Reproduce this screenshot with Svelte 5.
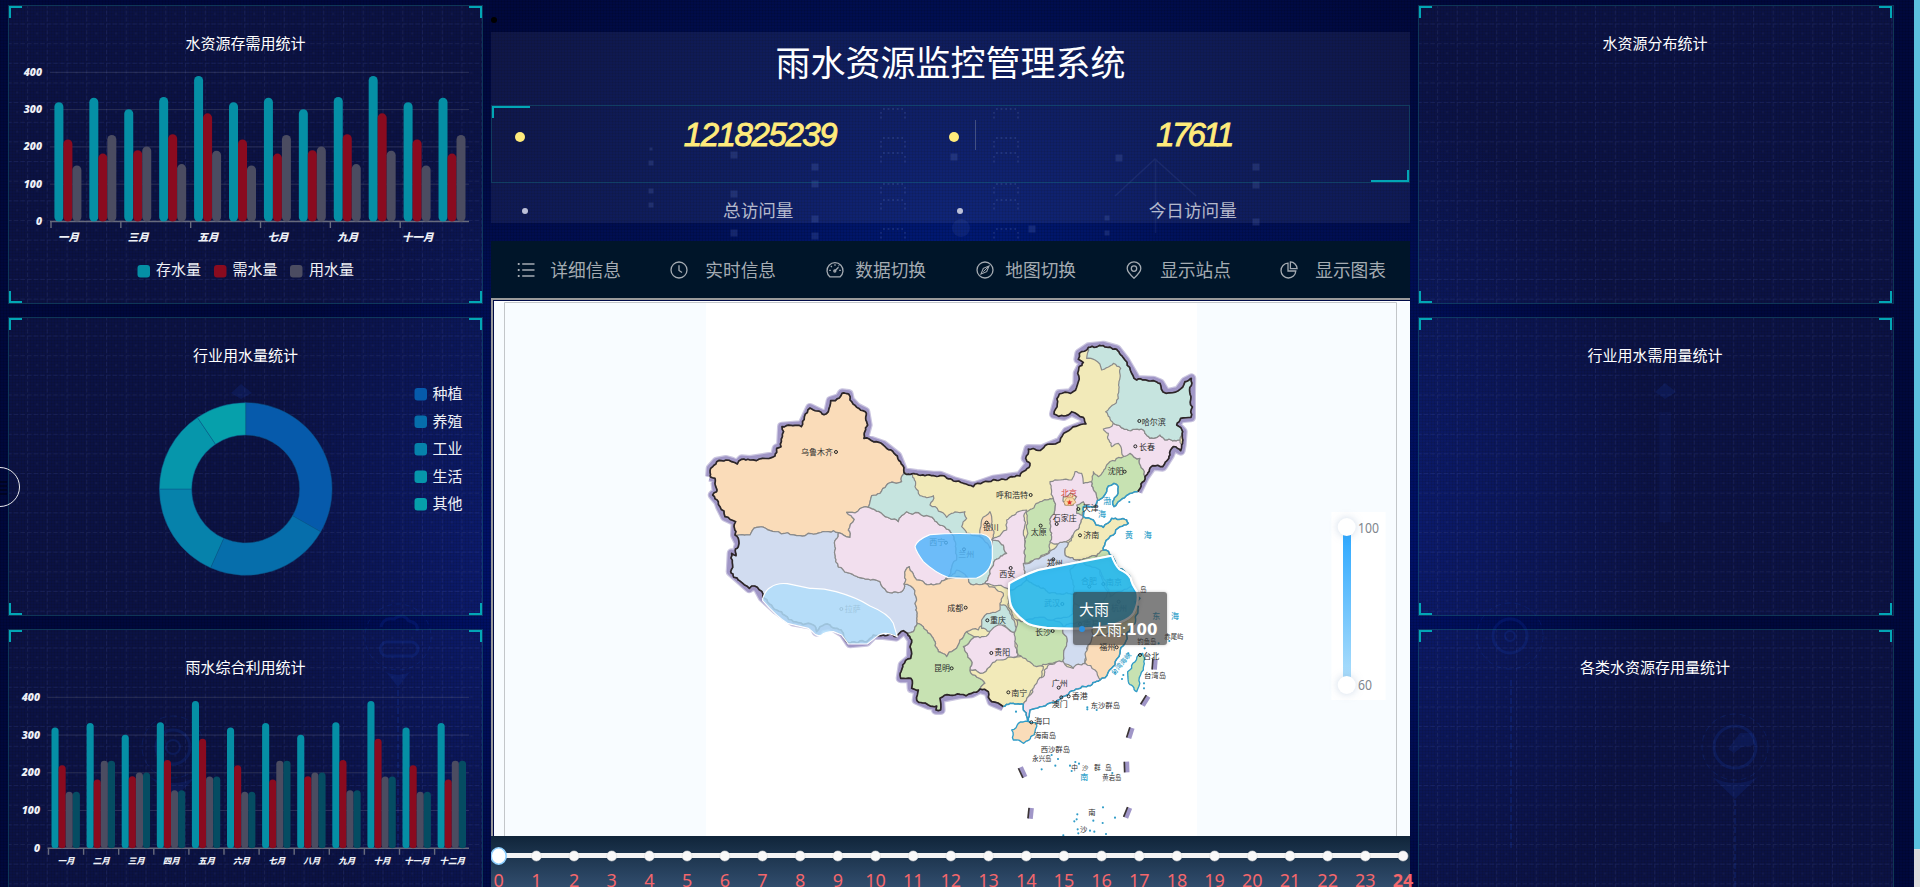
<script>
  const months = ['一月', '二月', '三月', '四月', '五月', '六月', '七月', '八月', '九月', '十月', '十一月', '十二月'];
  const stored = [320, 332, 301, 334, 390, 320, 332, 301, 334, 390, 320, 332];
  const needed = [220, 182, 191, 234, 290, 220, 182, 191, 234, 290, 220, 182];
  const used = [150, 232, 201, 154, 190, 150, 232, 201, 154, 190, 150, 232];
  const colors = ['#058fa5', '#8a0b1f', '#4b4c61', '#054c62'];

  const charts = {
    top: { series: [stored, needed, used], x0: 42, step: 34.92, y0: 215.5, k: 0.373, bw: 9, off: 3.4, every: 2, axisX: 33, labelY: 234.8, legend: true },
    bottom: { series: [stored, needed, used, used], x0: 39.5, step: 35.1, y0: 218.3, k: 0.3775, bw: 7.1, off: 3, every: 1, axisX: 31, labelY: 234.3, legend: false }
  };
  const legend = [['存水量', 128.5, 147], ['需水量', 205, 223.5], ['用水量', 281, 300]];

  const slices = [
    ['种植', '#065aab', 0, 119.7], ['养殖', '#066eab', 119.7, 204], ['工业', '#0682ab', 204, 270],
    ['生活', '#0696ab', 270, 326], ['其他', '#06a0ab', 326, 360]
  ];
  function arc(a, b) {
    const p = (r, d) => {
      const t = ((d - 90) * Math.PI) / 180;
      return `${(236.7 + r * Math.cos(t)).toFixed(2)} ${(171 + r * Math.sin(t)).toFixed(2)}`;
    };
    const big = b - a > 180 ? 1 : 0;
    return `M${p(86.3, a)}A86.3 86.3 0 ${big} 1 ${p(86.3, b)}L${p(54, b)}A54 54 0 ${big} 0 ${p(54, a)}Z`;
  }

  const menu = [
    ['list', '详细信息'], ['clock', '实时信息'], ['gauge', '数据切换'],
    ['compass', '地图切换'], ['pin', '显示站点'], ['pie', '显示图表']
  ];
  const menuLeft = [25.5, 179.5, 335, 485, 634.5, 789.5];
  const menuText = [59.3, 214.3, 364.3, 514.3, 669.3, 824.3];

  // Roughens each edge by midpoint displacement; shared edges get identical detail from either side.
  function rough(pts, closed = true) {
    const out = [];
    const split = (a, b) => {
      const dx = b[0] - a[0], dy = b[1] - a[1], len = Math.hypot(dx, dy);
      if (len < 10) { out.push(b); return; }
      const mx = (a[0] + b[0]) / 2, my = (a[1] + b[1]) / 2;
      const h = Math.sin(mx * 12.9898 + my * 78.233) * 43758.5453;
      const s = (h - Math.floor(h) - 0.5) * (dx > 0 || (dx === 0 && dy > 0) ? 1 : -1) * (len > 40 ? 0.16 : 0.36);
      const m = [mx - dy * s, my + dx * s];
      split(a, m); split(m, b);
    };
    out.push(pts[0]);
    for (let i = 1; i < pts.length; i++) split(pts[i - 1], pts[i]);
    if (closed) split(pts[pts.length - 1], pts[0]);
    return 'M' + out.map((p) => p[0].toFixed(1) + ' ' + p[1].toFixed(1)).join('L') + (closed ? 'Z' : '');
  }
  const plain = (pts) => 'M' + pts.map((p) => p.join(' ')).join('L');
  const P = (s) => s.trim().split(/\s+/).map((q) => q.split(',').map(Number));

  const north = P(`30,440 32,415 50,395 78,390 95,395 112,402 125,388 150,390 225,378 230,355 243,350 246,290 298,286 304,290 330,234 372,254 385,245 392,212 418,204 426,190 446,192 450,210 470,232 496,245 503,285 492,325 550,345 592,378 612,427 650,432 700,437 720,437 760,453 820,470 880,449 960,438 990,400 977,385 985,357 1025,358 1080,335 1100,305 1158,282 1150,262 1115,245 1092,258 1062,252 1078,192 1112,190 1132,165 1133,130 1150,97 1135,88 1138,70 1165,52 1210,47 1250,58 1275,90 1310,150 1360,152 1380,160 1398,190 1435,182 1455,155 1474,145 1473,200 1473,262 1442,265 1430,285 1448,305 1445,345 1442,362 1420,350 1410,375 1388,410 1358,407 1335,440 1313,485`);
  const coast = P(`1313,485 1295,490 1260,512 1242,530 1238,515 1252,495 1255,470 1242,460 1225,468 1220,485 1192,512 1185,530 1150,530 1150,560 1180,570 1188,585 1210,592 1235,565 1280,570 1285,580 1260,590 1240,615 1215,640 1210,660 1235,677 1255,715 1290,740 1300,770 1310,800 1320,805 1305,815 1315,830 1305,880 1280,910 1275,940 1260,970 1245,1005 1200,1050 1160,1070 1110,1085 1080,1108 1020,1130 990,1140 985,1165 990,1180 970,1140 970,1123 930,1120 910,1130`);
  const south = P(`910,1130 875,1115 865,1085 840,1077 815,1090 780,1093 720,1105 722,1140 708,1140 710,1128 685,1125 650,1110 655,1080 635,1075 633,1045 602,1045 608,1005 632,985 635,930 622,910 610,902 588,920 550,915 520,915 500,935 450,940 430,910 390,885 360,890 350,905 340,885 280,875 230,840 188,802 172,772 155,768 148,775 92,725 95,670 108,677 117,640 105,615 107,575 75,560 60,530 55,515 38,495 50,485 45,445 30,440`);
  const nation = [...north, ...coast.slice(1), ...south.slice(1, -1)];

  const O = '#fadcb9', B = '#d1dcf0', K = '#f2dfee', T = '#c6e4df', G = '#c7e2b2', Y = '#f2eab9';
  const provinces = [
    [O, '30,440 32,415 50,395 78,390 95,395 112,402 125,388 150,390 225,378 230,355 243,350 246,290 298,286 304,290 330,234 372,254 385,245 392,212 418,204 426,190 446,192 450,210 470,232 496,245 503,285 492,325 550,345 592,378 612,427 605,455 560,465 540,490 515,497 505,532 440,547 463,568 445,600 450,622 415,608 385,605 325,610 300,617 225,605 170,592 150,615 117,615 105,615 107,575 75,560 60,530 55,515 38,495 50,485 45,445'],
    [B, '117,615 150,615 170,592 225,605 300,617 325,610 385,605 415,608 405,650 407,695 430,720 540,755 560,785 605,785 612,762 632,768 648,800 652,880 640,905 622,910 610,902 588,920 550,915 520,915 500,935 450,940 430,910 390,885 360,890 350,905 340,885 280,875 230,840 188,802 172,772 155,768 148,775 92,725 95,670 108,677 117,640 105,615'],
    [K, '440,547 505,532 545,550 595,575 620,545 690,560 755,610 770,690 735,750 700,765 650,750 628,710 615,735 612,762 605,785 560,785 540,755 430,720 407,695 405,650 415,608 450,622 445,600 463,568'],
    [T, '612,427 635,432 645,470 660,497 700,497 690,525 740,562 755,550 795,545 800,565 785,590 800,610 840,620 875,630 910,645 920,670 885,690 870,720 855,760 820,765 800,740 770,720 735,750 770,690 755,610 690,560 620,545 595,575 545,550 505,532 515,497 540,490 560,465 605,455'],
    [O, '840,620 845,570 870,545 875,560 872,590 882,610 875,630 870,655'],
    [K, '875,630 905,610 920,600 920,570 955,545 980,540 975,640 975,700 980,750 930,780 855,760 870,720 885,690 920,670 910,645'],
    [G, '980,545 1020,515 1060,505 1065,540 1050,580 1055,620 1050,660 975,700 975,640'],
    [K, '1050,455 1080,450 1115,450 1125,425 1145,430 1150,460 1175,455 1190,500 1185,530 1150,530 1150,560 1130,600 1090,645 1050,635 1055,620 1050,580 1065,540 1060,505'],
    [Y, '1090,500 1110,490 1130,500 1120,525 1095,525'],
    [G, '1130,525 1150,515 1150,560 1130,550'],
    [G, '1175,455 1180,425 1195,440 1220,405 1270,380 1290,370 1320,385 1335,440 1313,485 1295,490 1260,512 1242,530 1238,515 1252,495 1255,470 1242,460 1225,468 1220,485 1192,512 1190,500'],
    [K, '1210,297 1240,280 1280,298 1330,300 1360,325 1380,315 1395,330 1440,330 1445,345 1442,362 1420,350 1410,375 1388,410 1358,407 1335,440 1320,385 1290,370 1270,378 1255,340 1235,350 1225,310'],
    [T, '1160,85 1165,52 1210,47 1250,58 1275,90 1310,150 1360,152 1380,160 1398,190 1435,182 1455,155 1474,145 1473,200 1473,262 1442,265 1430,285 1448,305 1440,330 1395,330 1380,315 1360,325 1330,300 1280,298 1240,280 1217,245 1255,205 1262,115 1240,100 1205,120 1185,90'],
    [Y, '1130,600 1150,560 1180,570 1188,585 1210,592 1235,565 1280,570 1285,580 1260,590 1240,615 1215,640 1210,660 1190,680 1140,690 1095,675 1105,640'],
    [B, '970,700 1055,660 1080,637 1105,640 1095,675 1140,690 1130,790 1050,790 980,750'],
    [T, '1110,720 1140,690 1200,720 1220,800 1180,850 1120,820'],
    [G, '1140,690 1190,680 1210,660 1235,677 1255,715 1290,740 1300,770 1230,800 1200,720'],
    [Y, '930,780 980,750 1050,790 1130,790 1120,850 1060,870 950,870 925,830'],
    [T, '840,870 880,830 920,830 930,850 945,880 945,910 910,885 880,910 845,895'],
    [O, '612,762 615,735 628,710 650,750 700,765 735,750 770,740 800,740 820,765 855,760 910,790 900,840 870,850 845,870 835,900 800,905 780,930 762,960 740,980 715,965 700,925 670,890 652,880 648,800 632,768'],
    [K, '790,950 830,920 850,920 905,885 950,910 945,940 955,975 930,990 870,1010 840,1030 810,1020 812,990'],
    [G, '652,880 670,890 700,925 715,965 740,980 762,960 780,930 800,905 830,920 790,950 812,990 810,1020 855,1060 840,1077 815,1090 780,1093 720,1105 722,1140 708,1140 710,1128 685,1125 650,1110 655,1080 635,1075 633,1045 602,1045 608,1005 632,985 635,930 622,910 640,905'],
    [Y, '810,1020 840,1030 870,1010 890,990 960,980 995,970 1030,1010 1025,1040 985,1100 970,1123 930,1120 910,1130 875,1115 865,1085 840,1077 855,1060'],
    [G, '950,870 1060,870 1090,890 1100,940 1085,1000 1050,1000 1010,1010 955,975 945,920'],
    [B, '1090,890 1180,870 1170,940 1150,1005 1120,1015 1085,1000 1100,940'],
    [O, '1180,915 1280,910 1275,940 1260,970 1245,1005 1200,1050 1185,1030 1155,1000'],
    [K, '985,1100 1030,1040 1045,1005 1090,995 1120,1015 1155,1000 1185,1020 1200,1050 1160,1070 1110,1085 1080,1108 1020,1130 990,1140 985,1165 990,1180 970,1140 970,1123']
  ].map(([f, s]) => [f, rough(P(s))]);
  const hainan = rough(P('935,1200 955,1180 985,1175 1010,1180 1002,1215 970,1240 940,1230'));
  const taiwan = rough(P('1315,975 1328,970 1330,1020 1310,1085 1285,1055 1283,1025'));

  // Place names: text, x, y, capital marker x, marker y
  const places = [
    ['乌鲁木齐', 303, 375, 408, 366], ['哈尔滨', 1325, 284, 1318, 273], ['长春', 1317, 359, 1306, 349],
    ['沈阳', 1223, 433, 1274, 425], ['呼和浩特', 888, 503, 992, 495], ['天津', 1148, 543, 1135, 537],
    ['石家庄', 1058, 572, 1070, 582], ['太原', 992, 615, 1022, 587], ['银川', 848, 601, 860, 578],
    ['济南', 1150, 624, 1140, 616], ['郑州', 1040, 708, 1060, 688], ['西安', 898, 741, 932, 714],
    ['西宁', 688, 645, 738, 638], ['兰州', 775, 680, 792, 658], ['拉萨', 434, 845, 424, 837],
    ['成都', 742, 842, 797, 833], ['重庆', 870, 879, 862, 871], ['合肥', 1143, 763, 1168, 770],
    ['南京', 1218, 765, 1210, 762], ['武汉', 1032, 829, 1087, 822], ['杭州', 1233, 842, 1256, 815],
    ['南昌', 1150, 890, 1140, 882], ['长沙', 1005, 914, 1058, 903], ['贵阳', 883, 976, 874, 969],
    ['昆明', 702, 1024, 755, 1015], ['南宁', 934, 1099, 925, 1087], ['广州', 1055, 1069, 1076, 1073],
    ['福州', 1198, 959, 1250, 952], ['台北', 1330, 987, 1320, 975], ['香港', 1115, 1108, 1106, 1099],
    ['澳门', 1055, 1131, 1084, 1102], ['海口', 1003, 1183, 994, 1177]
  ];
  const isles = [
    ['台湾岛', 1332, 1045, 22], ['东沙群岛', 1172, 1135, 22], ['海南岛', 1002, 1225, 22], ['西沙群岛', 1022, 1267, 22],
    ['永兴岛', 997, 1294, 19], ['中', 1114, 1320, 20], ['沙', 1145, 1320, 20], ['群', 1182, 1320, 20], ['岛', 1215, 1320, 20], ['黄岩岛', 1207, 1349, 19],
    ['南', 1165, 1455, 22], ['沙', 1140, 1506, 22], ['钓鱼岛', 1312, 941, 19], ['赤尾屿', 1393, 926, 19], ['岛', 1320, 785, 20]
  ];
  const seas = [
    ['渤', 1210, 523], ['海', 1194, 561], ['黄', 1275, 625], ['海', 1331, 625],
    ['东', 1357, 866], ['海', 1413, 866], ['南', 1141, 1350]
  ];
  const dashes = [
    [1363, 1003, 4], [1335, 1112, 32], [1290, 1209, 18], [1279, 1311, -2], [967, 1327, -25], [991, 1450, 6], [1282, 1448, 22]
  ];
  const specks = [
    [1288, 516], [948, 1145], [1162, 1132], [1162, 1138], [1190, 1140], [1055, 1275], [1074, 1287], [1025, 1318], [1066, 1307],
    [1110, 1307], [1126, 1296], [1115, 1323], [1137, 1301], [1237, 1329], [1209, 1432], [1132, 1453], [1130, 1468], [1123, 1474],
    [1180, 1472], [1208, 1479], [1245, 1463], [1133, 1498], [1170, 1502], [1183, 1505], [1218, 1512], [1090, 1516],
    [1334, 955], [1332, 1060], [1332, 1075], [1376, 940], [1408, 933], [1270, 1035], [1266, 1047], [1245, 1028], [1285, 970], [1135, 1510]
  ];

  const dots = [
    [651, 163, 5], [651, 191, 5], [651, 205, 5], [651, 149, 3], [734, 155, 7], [734, 194, 7], [734, 233, 7],
    [815, 167, 7], [815, 184, 7], [815, 219, 7], [815, 236, 7], [954, 157, 7], [1119, 158, 7], [1256, 167, 7],
    [1256, 185, 7], [1256, 222, 7], [1032, 229, 7], [1107, 218, 5], [1107, 233, 5]
  ];
  const ticks = Array.from({ length: 25 }, (_, i) => i);
</script>

{#snippet barChart(c)}
  <svg class="chart" width="473" height="297" viewBox="0 0 473 297">
    {#each [0, 100, 200, 300, 400] as v}
      <line x1={c.x0 - 1} x2="460" y1={c.y0 - v * c.k} y2={c.y0 - v * c.k} stroke={v ? 'rgba(255,255,255,.13)' : '#686b7d'} stroke-width={v ? 1 : 1.5} />
      <text class="ax" x={c.axisX} y={c.y0 - v * c.k + 3.5} text-anchor="end">{v}</text>
    {/each}
    {#each months as m, i}
      {#if i % c.every === 0}
        <line x1={c.x0 + i * c.step} x2={c.x0 + i * c.step} y1={c.y0} y2={c.y0 + 6.5} stroke="#686b7d" stroke-width="1.4" />
        <text class="mon" class:small={c.every === 1} x={c.x0 + (i + 0.5) * c.step} y={c.labelY} text-anchor="middle">{m}</text>
      {/if}
      {#each c.series as s, j}
        <rect x={c.x0 + i * c.step + c.off + j * c.bw} y={c.y0 - s[i] * c.k} width={c.bw} height={s[i] * c.k} rx={c.bw / 2} fill={colors[j]} />
      {/each}
    {/each}
    {#if c.legend}
      {#each legend as [t, x, tx], i}
        <rect {x} y="259" width="12.500" height="12.500" rx="3" fill={colors[i]} />
        <text class="leg" x={tx} y="269">{t}</text>
      {/each}
    {/if}
  </svg>
{/snippet}

{#snippet corners()}
  <i class="c tl"></i><i class="c tr"></i><i class="c bl"></i><i class="c br"></i>
  <svg class="grid" width="100%" height="100%">
    <defs>
      <pattern id="mesh" x="18" y="17.5" width="19.75" height="19.65" patternUnits="userSpaceOnUse">
        <path d="M0 .5H19.75M.5 0V19.65" stroke="#7d93e8" stroke-opacity=".11" stroke-dasharray="4.500 2.100" />
        <rect x="9" y="9" width="2" height="2" fill="#7d93e8" fill-opacity=".06" />
      </pattern>
    </defs>
    <rect width="100%" height="100%" fill="url(#mesh)" />
  </svg>
{/snippet}

{#snippet icon(name)}
  <svg class="ico" width="18" height="18" viewBox="0 0 18 18" fill="none" stroke="#a4abb2" stroke-width="1.3">
    {#if name === 'list'}
      <path d="M5.2 3H17.5M5.2 9H17.5M5.2 15H17.5" /><path d="M.8 3H2.6M.8 9H2.6M.8 15H2.6" stroke-width="1.8" />
    {:else if name === 'clock'}
      <circle cx="9" cy="9" r="8" /><path d="M9 4.3V9.4L12 11.6" />
    {:else if name === 'gauge'}
      <path d="M4 15.9A8 8 0 1 1 14 15.9Z" /><path d="M9 9.8L12.5 6.2M9 3.2V4.8M4.8 4.9L5.9 6M3.2 9.4H4.8M13.2 9.4H14.8M12.5 4.5L13.2 5" /><circle cx="8.8" cy="10" r="1" />
    {:else if name === 'compass'}
      <circle cx="9" cy="9" r="8" /><path d="M13 5L10.7 10.7L5 13L7.3 7.3Z" stroke-width="1.1" /><path d="M7.3 10.7L13 5" stroke-width="1" />
    {:else if name === 'pin'}
      <path d="M9 17.2C5 13.7 2.2 11 2.2 7.6A6.8 6.8 0 0 1 15.8 7.6C15.8 11 13 13.7 9 17.2Z" /><circle cx="9" cy="7.6" r="2.7" />
    {:else}
      <path d="M8 2.2A7.4 7.4 0 1 0 15.8 10H8Z" /><path d="M10.4.9A7 7 0 0 1 17.1 7.6H10.4Z" />
    {/if}
  </svg>
{/snippet}

<div class="page">
  <div class="toggle">
    <svg width="8" height="16" viewBox="0 0 8 16"><path d="M0 2H7M0 6H7M0 10H7M0 14H7" stroke="#00020f" stroke-width="1" /></svg>
  </div>

  <div class="col left">
    <section class="panel">
      <h2>水资源存需用统计</h2>
      {@render barChart(charts.top)}
      {@render corners()}
    </section>
    <section class="panel">
      <h2>行业用水量统计</h2>
      <svg class="chart" width="473" height="297" viewBox="0 0 473 297">
        {#each slices as [name, fill, a, b], i}
          <path d={arc(a, b)} {fill} stroke="#0a5b8c" stroke-width=".5" />
          <rect x="405.5" y={70 + i * 27.5} width="12.500" height="12.500" rx="3" {fill} />
          <text class="leg" x="423.500" y={81 + i * 27.5}>{name}</text>
        {/each}
      </svg>
      {@render corners()}
    </section>
    <section class="panel">
      <h2>雨水综合利用统计</h2>
      {@render barChart(charts.bottom)}
      {@render corners()}
    </section>
  </div>

  <main class="mid">
    <span class="bullet0"></span>
    <header>
      <h1>雨水资源监控管理系统</h1>
      <ul class="nums">
        <li class="a">121825239</li>
        <li class="b">17611</li>
      </ul>
      <ul class="names">
        <li>总访问量</li>
        <li>今日访问量</li>
      </ul>
      <svg class="deco" width="919" height="209" viewBox="491 32 919 209">
        {#each dots as [x, y, s]}
          <rect x={x - s / 2} y={y - s / 2} width={s} height={s} fill="#8fa5ef" fill-opacity=".15" />
        {/each}
        {#each [893, 1006] as cx}
          <g fill="none" stroke="#8fa5ef" stroke-opacity=".15" stroke-width="1.8" stroke-dasharray="1.8 2.800">
            {#each [109, 138, 153, 184, 200, 229] as y}
              <path d={`M${cx - 10} ${y}H${cx + 10}M${cx - 12} ${y + 3}V${y + 11}M${cx + 12} ${y + 3}V${y + 11}`} />
            {/each}
          </g>
        {/each}
        <path d="M1115 196L1155 159L1196 196M1155.500 159V233" fill="none" stroke="#8fa5ef" stroke-opacity=".09" stroke-width="1.5" />
        <circle cx="961" cy="228" r="9" fill="#8fa5ef" fill-opacity=".08" />
      </svg>
    </header>

    <nav>
      {#each menu as [kind, label], i}
        <a style:margin-left="{i ? menuLeft[i] - menuText[i - 1] - 71 : menuLeft[0]}px" style:gap="{menuText[i] - menuLeft[i] - 18}px">
          {@render icon(kind)}<span>{label}</span>
        </a>
      {/each}
    </nav>

    <div class="mapbox">
      <svg width="916" height="586" viewBox="494 301 916 586">
        <rect x="494" y="301" width="916" height="586" fill="#f8fcff" />
        <rect x="494" y="301" width="916" height="1" fill="#fff" />
        <rect x="706" y="302" width="491" height="585" fill="#fff" />
        <path d="M504.500 887V302.500H1396.500V887" fill="none" stroke="#c3c6c9" />
        <g transform="translate(700 330) scale(.33333)" stroke-linejoin="round">
          <g fill="none" stroke="#cbc6e0" stroke-width="30"><path d={plain(north)} /><path d={plain(south)} /></g>
          <g fill="none" stroke="#a096c6" stroke-width="23"><path d={plain(north)} /><path d={plain(south)} /></g>
          <path d={rough(nation)} fill={Y} />
          {#each provinces as [fill, d]}
            <path {d} {fill} stroke="#8a8a8a" stroke-width="3.600" />
          {/each}
          <path d={rough(north, false)} fill="none" stroke="#2c2528" stroke-width="5" />
          <path d={rough(south, false)} fill="none" stroke="#2c2528" stroke-width="5" />
          <path d={rough(coast, false)} fill="none" stroke="#2f9cc8" stroke-width="4.500" />
          <path d={hainan} fill={O} stroke="#2f9cc8" stroke-width="4" />
          <path d={taiwan} fill={G} stroke="#2f9cc8" stroke-width="4" />
          {#each dashes as [x, y, r]}
            <g transform={`translate(${x} ${y}) rotate(${r})`}>
              <rect x="-6" y="-16" width="15" height="32" fill="#a096c8" /><rect x="-8" y="-16" width="5" height="32" fill="#3a3434" />
            </g>
          {/each}
          {#each specks as [x, y]}<circle cx={x} cy={y} r="3.200" fill="#2f9cc8" />{/each}
          {#each places as [t, x, y, cx, cy]}
            <circle {cx} {cy} r="4.500" fill="none" stroke="#222" stroke-width="3" />
            <text class="place" {x} {y}>{t}</text>
          {/each}
          {#each isles as [t, x, y, s]}<text class="place" {x} {y} style:font-size="{s}px">{t}</text>{/each}
          {#each seas as [t, x, y]}<text class="sea" {x} {y}>{t}</text>{/each}
          <text class="sea" x="1243" y="1037" transform="rotate(-50 1243 1037)" style="font-size:20px">台湾海峡</text>
          <path d="M1092 518l8-15h18l10 14-13 9h-18z" fill="#f8d9a8" stroke="#b98a55" stroke-width="2" />
          <text class="place" x="1083" y="497" style="fill:#d8433a">北京</text>
          <text x="1098" y="524" style="font:24px 'DejaVu Sans',sans-serif" fill="#e0332a">★</text>

          <path d="M188 805Q198 778 212 772Q230 758 262 761L330 775Q370 774 408 785Q470 802 510 828Q565 850 580 880L592 920Q550 900 530 920L502 942H445L425 915L400 905Q375 905 365 915Q350 922 338 906L325 895L262 880Q230 860 188 812Z" fill="#b1ddfa" fill-opacity=".86" stroke="#fff" stroke-width="3.500" />
          <path d="M645 650Q650 630 690 614Q760 608 845 612Q877 618 877 650V685Q872 728 830 744Q790 746 745 743Q705 728 670 695Q648 665 645 650Z" fill="#4fb4fb" fill-opacity=".82" stroke="#fff" stroke-width="3.500" />
          <path class="shade" d="M928 760Q970 735 1015 720L1235 677Q1245 705 1258 718Q1285 730 1292 745Q1294 760 1311 785Q1318 815 1300 850Q1280 880 1190 893Q1110 898 1040 893Q990 888 975 875Q935 845 930 815Q925 785 928 760Z" fill="none" stroke="#fff" stroke-width="6" />
          <path d="M928 760Q970 735 1015 720L1235 677Q1245 705 1258 718Q1285 730 1292 745Q1294 760 1311 785Q1318 815 1300 850Q1280 880 1190 893Q1110 898 1040 893Q990 888 975 875Q935 845 930 815Q925 785 928 760Z" fill="#21b6ef" fill-opacity=".88" stroke="#fff" stroke-width="6" />
        </g>
        <rect x="1331.500" y="512" width="54" height="188" fill="#fff" />
        <defs>
          <linearGradient id="scale" x2="0" y2="1"><stop offset="0" stop-color="#2fa9ff" /><stop offset="1" stop-color="#abddfb" /></linearGradient>
          <linearGradient id="tl" x2="0" y2="1"><stop offset="0" stop-color="#10253a" /><stop offset="1" stop-color="#314d6d" /></linearGradient>
        </defs>
        <rect x="1343" y="535" width="8" height="142" fill="url(#scale)" />
        <g class="knob"><circle cx="1346.700" cy="527" r="9" fill="#fff" /><circle cx="1346.700" cy="685" r="9" fill="#fff" /></g>
        <text class="vm" x="1358" y="533" textLength="21" lengthAdjust="spacingAndGlyphs">100</text>
        <text class="vm" x="1358" y="690" textLength="14" lengthAdjust="spacingAndGlyphs">60</text>
      </svg>
      <div class="tip"><div>大雨</div><div><i></i>大雨:<b>100</b></div></div>
      <svg class="timeline" width="940" height="51" viewBox="491 836 940 51">
        <rect x="491" y="836" width="919" height="51" fill="url(#tl)" />
        <rect x="498" y="853" width="905" height="5" fill="#f4f4f4" />
        {#each ticks as i}
          {#if i}<circle cx={498.7 + i * 37.68} cy="856" r="5" fill="#f9f9f9" stroke="#dedede" stroke-width=".6" />{/if}
          <text x={498.7 + i * 37.68} y="887" text-anchor="middle" class:last={i === 24}>{i}</text>
        {/each}
        <ellipse cx="498.700" cy="856" rx="7.500" ry="8.200" fill="#fff" stroke="#8fd0ff" stroke-width="1.600" />
      </svg>
    </div>
  </main>

  <div class="col right">
    <section class="panel"><h2>水资源分布统计</h2>{@render corners()}</section>
    <section class="panel"><h2>行业用水需用量统计</h2>{@render corners()}</section>
    <section class="panel"><h2>各类水资源存用量统计</h2>{@render corners()}</section>
  </div>

  <svg class="backdrop" width="1920" height="887">
    <g fill="none" stroke="#1440c8" stroke-opacity=".17">
      <circle cx="398" cy="637" r="33" stroke-dasharray="5 4" /><path d="M381 627q2-10 13-8q8-7 15 2q10 2 8 10M386 642h25a5 5 0 0 1 0 14h-22a6 6 0 0 1-3-14" stroke-width="3" />
      <circle cx="173" cy="747" r="17" stroke-width="3" /><circle cx="173" cy="747" r="31" stroke-dasharray="7 4" /><circle cx="173" cy="747" r="7" stroke-width="2" />
      <circle cx="1510" cy="636" r="17" stroke-width="3" /><circle cx="1510" cy="636" r="33" stroke-dasharray="6 4" /><circle cx="1510" cy="636" r="5" stroke-width="2" />
      <circle cx="1735" cy="747" r="21" stroke-width="3" /><circle cx="1735" cy="747" r="33" stroke-dasharray="6 4" />
      <path d="M1511 680V850M1735 800V887M398 690V850" stroke-width="2" stroke-dasharray="6 3" />
    </g>
    <g fill="#1440c8" fill-opacity=".14">
      <path d="M1712 777q23 12 46 0l-23 22zM1728 749l12-16h12l4 12-14 2-8 6zM150 777q23 12 46 0l-23 22zM386 672q12 6 24 0l-12 15zM231 393l10-9 11 9-11 6zM1655 392l10-9 11 9-11 7z" />
    </g>
    <rect x="1659" y="412" width="12" height="110" fill="#1d3fc8" fill-opacity=".07" />
  </svg>
  <div class="scroll"></div>
</div>

<style>
  :global(body) { margin: 0; overflow: hidden; background: #000a3c; }
  .page {
    position: relative; display: flex; gap: 8px; width: 1920px; height: 887px; box-sizing: border-box; padding-left: 8px; overflow: hidden;
    font-family: 'Noto Sans CJK SC', sans-serif; color: #fff;
    background:
      repeating-linear-gradient(0deg, rgba(0, 0, 0, .1) 0 1px, transparent 1px 3px),
      repeating-linear-gradient(90deg, rgba(0, 0, 0, .1) 0 1px, transparent 1px 3px),
      radial-gradient(ellipse 560px 430px at 960px 270px, #001a78 0%, rgba(0, 20, 100, .7) 45%, rgba(0, 12, 70, 0) 100%),
      radial-gradient(ellipse 240px 420px at 500px 560px, rgba(0, 20, 120, .75), rgba(0, 12, 70, 0)),
      radial-gradient(ellipse 260px 420px at 1400px 540px, rgba(0, 20, 120, .75), rgba(0, 12, 70, 0)),
      #00083c;
  }
  h1, h2, ul { margin: 0; padding: 0; font-weight: 400; }
  .col { display: flex; flex-direction: column; gap: 13px; padding-top: 5px; flex: none; }
  .left { width: 475px; }
  .right { width: 476px; }
  .panel {
    position: relative; flex: none; height: 299px; box-sizing: border-box; border: 1px solid rgba(20, 110, 120, .4);
    background: rgba(255, 255, 255, .045);
  }
  .panel h2 { position: relative; z-index: 2; padding-top: 26px; font-size: 15px; line-height: 22px; text-align: center; }
  .right h2 { padding-right: 2px; }
  .chart { position: absolute; left: 0; top: 0; z-index: 2; }
  .grid { position: absolute; inset: 0; }
  .c { position: absolute; width: 11px; height: 10px; border: 0 solid #02a6b5; z-index: 3; }
  .tl { left: 0; top: 0; border-width: 2px 0 0 2px; }
  .tr { right: 0; top: 0; border-width: 2px 2px 0 0; }
  .bl { left: 0; bottom: 0; border-width: 0 0 2px 2px; }
  .br { right: 0; bottom: 0; border-width: 0 2px 2px 0; }
  .right .tr, .right .br { right: 1px; }
  .ax { font: italic 800 10.500px 'Open Sans', 'Noto Sans', sans-serif; fill: #eef0f6; }
  .mon { font: italic 900 10.500px 'Noto Sans CJK SC', sans-serif; fill: #eef0f6; }
  .mon.small { font-size: 8.500px; }
  .leg { font-size: 15px; fill: #eef0f6; }

  .mid { position: relative; width: 919px; flex: none; display: flex; flex-direction: column; padding-top: 32px; box-sizing: border-box; }
  .bullet0 { position: absolute; left: 0; top: 17px; width: 6px; height: 6px; border-radius: 50%; background: #000; }
  header { position: relative; height: 191px; background: rgba(255, 255, 255, .06); flex: none; }
  h1 { height: 73px; font-size: 35px; line-height: 57px; text-align: center; }
  .deco { position: absolute; left: 0; top: 0; z-index: 0; }
  header h1, header ul { position: relative; z-index: 1; }
  header ul { display: flex; list-style: none; }
  li { flex: 1; position: relative; text-align: center; }
  .nums { height: 78px; box-sizing: border-box; border: 1px solid rgba(20, 120, 130, .38); color: #ffeb7b; padding-left: 49px; }
  .nums::before, .nums::after { content: ''; position: absolute; width: 36px; height: 10px; border: 0 solid #02a6b5; }
  .nums::before { left: 0; top: 0; border-width: 2px 0 0 2px; }
  .nums::after { right: 0; bottom: 0; border-width: 0 2px 2px 0; }
  .nums li { font: italic 400 33px/58px 'Liberation Sans', sans-serif; height: 76px; text-indent: 4px; -webkit-text-stroke: .9px #ffeb7b; }
  .nums .a { letter-spacing: -1.400px; }
  .nums .b { letter-spacing: -2.800px; }
  .nums li::before { content: ''; position: absolute; width: 10px; height: 10px; border-radius: 50%; background: #ffeb7b; top: 26px; left: -26px; }
  .nums .b::before { left: -26px; }
  .nums .b::after { content: ''; position: absolute; left: 0; top: 14px; width: 1px; height: 30px; background: rgba(255, 255, 255, .22); }
  .names { color: rgba(255, 255, 255, .7); font-size: 17.600px; line-height: 53px; padding-left: 50px; }
  .names li { height: 40px; }
  .names li::before { content: ''; position: absolute; left: -19px; top: 25px; width: 6px; height: 6px; border-radius: 50%; background: #bcc0d8; }
  nav { display: flex; align-items: center; height: 57px; margin-top: 18px; background: #001529; flex: none; }
  nav a { display: flex; align-items: center; flex: none; height: 57px; padding-top: 1px; box-sizing: border-box; }
  nav span { width: 71px; font-size: 17.700px; line-height: 24px; color: #a4abb2; white-space: nowrap; }
  .ico { flex: none; }
  nav span { margin-top: -2px; }
  .mapbox { position: relative; flex: none; height: 589px; box-sizing: border-box; border-top: 2px solid #9a9a9a; border-left: 2px solid #9a9a9a; padding: 1px 0 0 1px; background: #000b47; }
  .mapbox svg { display: block; }
  .place { font: 24px 'Noto Sans CJK SC', sans-serif; fill: #2c2c2c; }
  .sea { font: 500 24px 'Noto Sans CJK SC', sans-serif; fill: #3aa5cc; }
  .shade { filter: drop-shadow(0 2px 8px rgba(0, 0, 0, .4)); }
  .knob { filter: drop-shadow(0 0 4px rgba(90, 130, 180, .3)); }
  .vm { font: 14px 'Noto Sans', sans-serif; fill: #80868e; }
  .tip { position: absolute; left: 580px; top: 292px; width: 94px; height: 53px; box-sizing: border-box; padding: 7px 0 0 6px; border-radius: 3px; background: rgba(50, 50, 50, .62); box-shadow: 0 0 3px rgba(0, 0, 0, .25); font-size: 15px; line-height: 20px; white-space: nowrap; }
  .tip i { display: inline-block; width: 6px; height: 6px; margin: 0 7px 4px 0; border-radius: 50%; background: #2b8fdf; vertical-align: middle; }
  .tip b { font-family: 'DejaVu Sans', sans-serif; font-size: 15px; }
  .mapbox .timeline { position: absolute; left: -2px; top: 536px; }
  .timeline text { font: 18px 'Noto Sans', sans-serif; fill: #f4676c; }
  .timeline text.last { font-weight: 700; }
  .toggle { position: absolute; z-index: 4; left: -20px; top: 467px; width: 38px; height: 38px; border: 1px solid #e8e8ee; border-radius: 50%; }
  .toggle svg { position: absolute; left: 19px; top: 12px; }
  .backdrop { position: absolute; left: 0; top: 0; pointer-events: none; }
  .col, .mid { z-index: 1; }
  .scroll { position: absolute; right: 0; top: 0; width: 6px; height: 887px; background: linear-gradient(#5bc0de 849px, #ddd 849px); }
</style>
